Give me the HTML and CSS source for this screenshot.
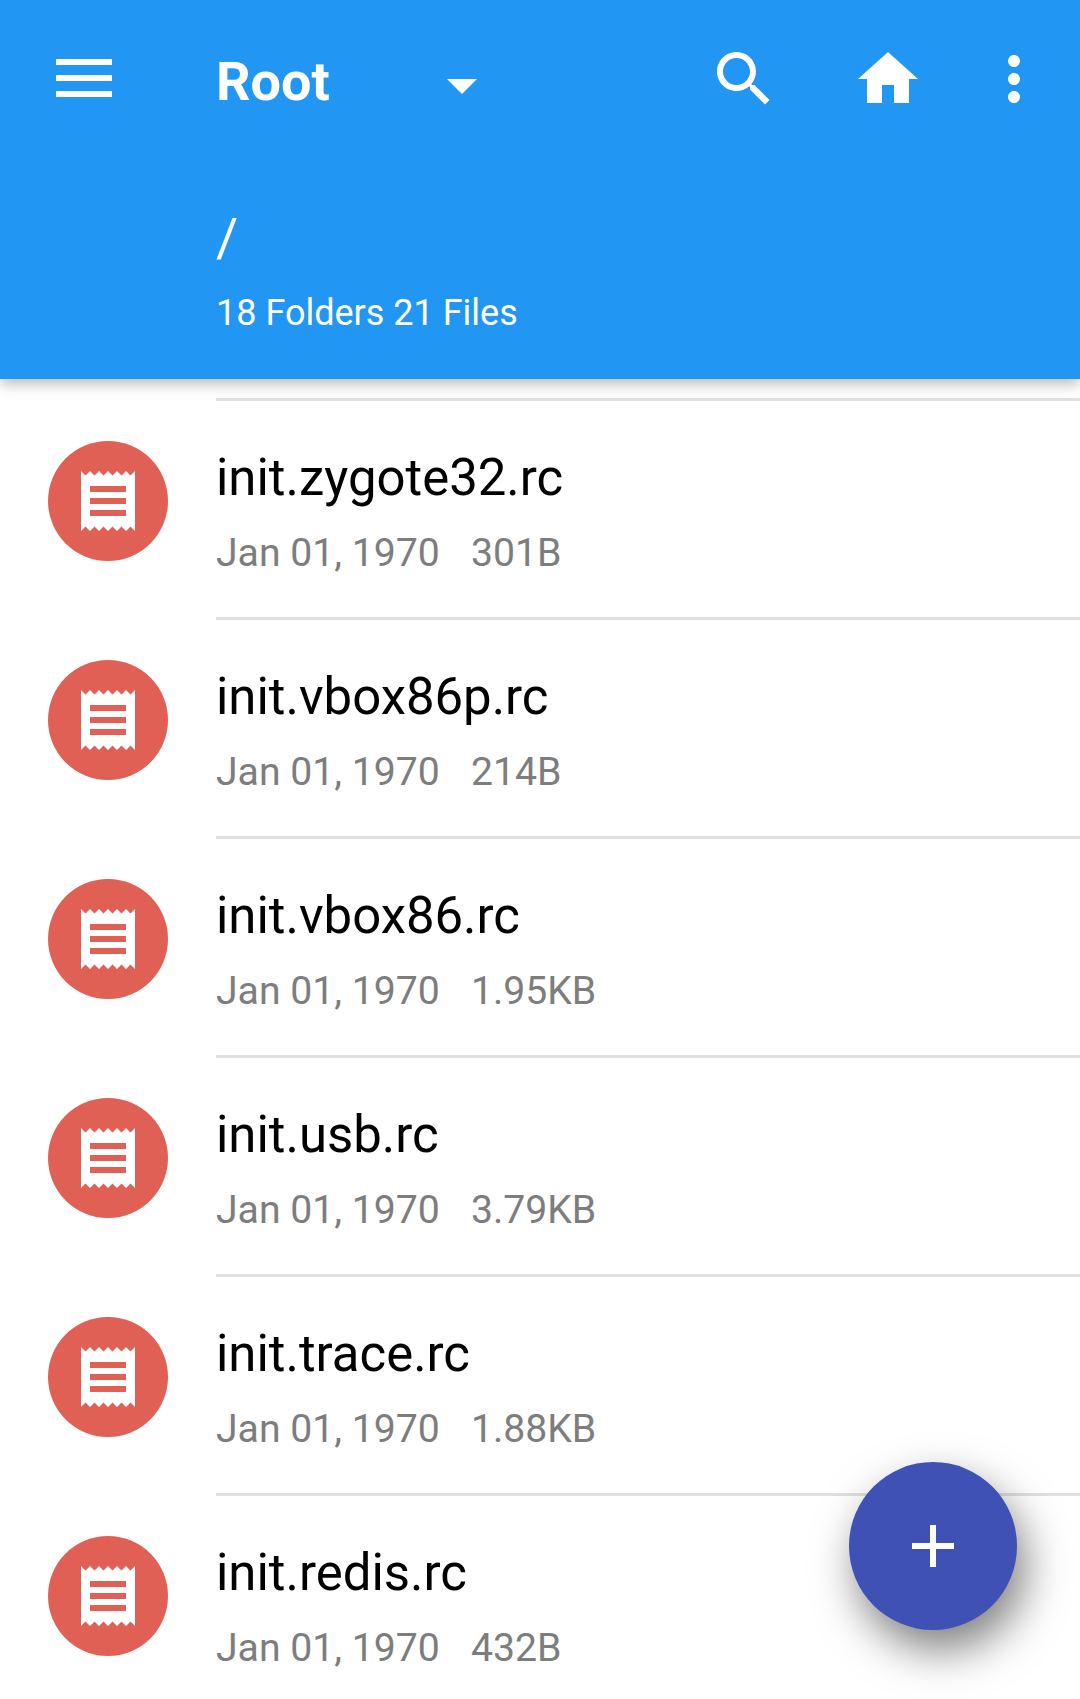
FILE: index.html
```html
<!DOCTYPE html>
<html lang="en">
<head>
    <meta charset="UTF-8">
    <title>Root</title>
    <link rel="stylesheet" href="styles.css">
</head>

<body>
    <header class="appbar">
        <div class="toolbar">
            <svg class="menu-icon" viewBox="0 0 56 38"><path d="M0 0h56v6H0zM0 16h56v6H0zM0 32h56v6H0z"/></svg>
            <h1 class="title">Root</h1>
            <svg class="icon caret" viewBox="0 0 24 24"><path d="M7 10l5 5 5-5z"/></svg>
            <svg class="icon search" viewBox="0 0 24 24"><path d="M15.5 14h-.79l-.28-.27C15.41 12.59 16 11.11 16 9.5 16 5.91 13.09 3 9.5 3S3 5.91 3 9.5 5.91 16 9.5 16c1.61 0 3.09-.59 4.23-1.57l.27.28v.79l5 4.99L20.49 19l-4.99-5zm-6 0C7.01 14 5 11.99 5 9.5S7.01 5 9.5 5 14 7.01 14 9.5 11.99 14 9.5 14z"/></svg>
            <svg class="icon home" viewBox="0 0 24 24"><path d="M10 20v-6h4v6h5v-8h3L12 3 2 12h3v8z"/></svg>
            <svg class="icon more" viewBox="0 0 24 24"><path d="M12 8c1.1 0 2-.9 2-2s-.9-2-2-2-2 .9-2 2 .9 2 2 2zm0 2c-1.1 0-2 .9-2 2s.9 2 2 2 2-.9 2-2-.9-2-2-2zm0 6c-1.1 0-2 .9-2 2s.9 2 2 2 2-.9 2-2-.9-2-2-2z"/></svg>
        </div>
        <div class="path">/</div>
        <div class="counts">18 Folders 21 Files</div>
    </header>

    <ul class="files">
        <li class="file">
            <svg class="file-icon" viewBox="0 0 120 120"><circle cx="60" cy="60" r="60"/><path transform="translate(24 24) scale(3)" class="receipt" d="M18 17H6v-2h12v2zm0-4H6v-2h12v2zm0-4H6V7h12v2zM3 22l1.5-1.5L6 22l1.5-1.5L9 22l1.5-1.5L12 22l1.5-1.5L15 22l1.5-1.5L18 22l1.5-1.5L21 22V2l-1.5 1.5L18 2l-1.5 1.5L15 2l-1.5 1.5L12 2l-1.5 1.5L9 2 7.5 3.5 6 2 4.5 3.5 3 2v20z"/></svg>
            <div class="file-info">
                <div class="file-name">init.zygote32.rc</div>
                <div class="file-meta"><span>Jan 01, 1970</span><span>301B</span></div>
            </div>
        </li>
        <li class="file">
            <svg class="file-icon" viewBox="0 0 120 120"><circle cx="60" cy="60" r="60"/><path transform="translate(24 24) scale(3)" class="receipt" d="M18 17H6v-2h12v2zm0-4H6v-2h12v2zm0-4H6V7h12v2zM3 22l1.5-1.5L6 22l1.5-1.5L9 22l1.5-1.5L12 22l1.5-1.5L15 22l1.5-1.5L18 22l1.5-1.5L21 22V2l-1.5 1.5L18 2l-1.5 1.5L15 2l-1.5 1.5L12 2l-1.5 1.5L9 2 7.5 3.5 6 2 4.5 3.5 3 2v20z"/></svg>
            <div class="file-info">
                <div class="file-name">init.vbox86p.rc</div>
                <div class="file-meta"><span>Jan 01, 1970</span><span>214B</span></div>
            </div>
        </li>
        <li class="file">
            <svg class="file-icon" viewBox="0 0 120 120"><circle cx="60" cy="60" r="60"/><path transform="translate(24 24) scale(3)" class="receipt" d="M18 17H6v-2h12v2zm0-4H6v-2h12v2zm0-4H6V7h12v2zM3 22l1.5-1.5L6 22l1.5-1.5L9 22l1.5-1.5L12 22l1.5-1.5L15 22l1.5-1.5L18 22l1.5-1.5L21 22V2l-1.5 1.5L18 2l-1.5 1.5L15 2l-1.5 1.5L12 2l-1.5 1.5L9 2 7.5 3.5 6 2 4.5 3.5 3 2v20z"/></svg>
            <div class="file-info">
                <div class="file-name">init.vbox86.rc</div>
                <div class="file-meta"><span>Jan 01, 1970</span><span>1.95KB</span></div>
            </div>
        </li>
        <li class="file">
            <svg class="file-icon" viewBox="0 0 120 120"><circle cx="60" cy="60" r="60"/><path transform="translate(24 24) scale(3)" class="receipt" d="M18 17H6v-2h12v2zm0-4H6v-2h12v2zm0-4H6V7h12v2zM3 22l1.5-1.5L6 22l1.5-1.5L9 22l1.5-1.5L12 22l1.5-1.5L15 22l1.5-1.5L18 22l1.5-1.5L21 22V2l-1.5 1.5L18 2l-1.5 1.5L15 2l-1.5 1.5L12 2l-1.5 1.5L9 2 7.5 3.5 6 2 4.5 3.5 3 2v20z"/></svg>
            <div class="file-info">
                <div class="file-name">init.usb.rc</div>
                <div class="file-meta"><span>Jan 01, 1970</span><span>3.79KB</span></div>
            </div>
        </li>
        <li class="file">
            <svg class="file-icon" viewBox="0 0 120 120"><circle cx="60" cy="60" r="60"/><path transform="translate(24 24) scale(3)" class="receipt" d="M18 17H6v-2h12v2zm0-4H6v-2h12v2zm0-4H6V7h12v2zM3 22l1.5-1.5L6 22l1.5-1.5L9 22l1.5-1.5L12 22l1.5-1.5L15 22l1.5-1.5L18 22l1.5-1.5L21 22V2l-1.5 1.5L18 2l-1.5 1.5L15 2l-1.5 1.5L12 2l-1.5 1.5L9 2 7.5 3.5 6 2 4.5 3.5 3 2v20z"/></svg>
            <div class="file-info">
                <div class="file-name">init.trace.rc</div>
                <div class="file-meta"><span>Jan 01, 1970</span><span>1.88KB</span></div>
            </div>
        </li>
        <li class="file">
            <svg class="file-icon" viewBox="0 0 120 120"><circle cx="60" cy="60" r="60"/><path transform="translate(24 24) scale(3)" class="receipt" d="M18 17H6v-2h12v2zm0-4H6v-2h12v2zm0-4H6V7h12v2zM3 22l1.5-1.5L6 22l1.5-1.5L9 22l1.5-1.5L12 22l1.5-1.5L15 22l1.5-1.5L18 22l1.5-1.5L21 22V2l-1.5 1.5L18 2l-1.5 1.5L15 2l-1.5 1.5L12 2l-1.5 1.5L9 2 7.5 3.5 6 2 4.5 3.5 3 2v20z"/></svg>
            <div class="file-info">
                <div class="file-name">init.redis.rc</div>
                <div class="file-meta"><span>Jan 01, 1970</span><span>432B</span></div>
            </div>
        </li>
    </ul>

    <button class="fab"><svg viewBox="0 0 42 42"><path d="M18 0h6v18h18v6H24v18h-6V24H0v-6h18z"/></svg></button>
</body>

</html>
```

FILE: styles.css
```css
html, body {
    height: 1699px;
    overflow: hidden;
}

body {
    margin: 0;
    font-family: Roboto, sans-serif;
    background-color: #fff;
    color: #000;
}

.appbar {
    position: relative;
    z-index: 1;
    height: 379px;
    background-color: #2196f3;
    color: #fff;
    box-shadow: 0 4px 14px rgba(0, 0, 0, 0.3);
    box-sizing: border-box;
    padding-top: 43px;
}

.toolbar {
    display: flex;
    align-items: flex-start;
    height: 72px;
}

.icon {
    width: 72px;
    height: 72px;
    flex-shrink: 0;
    fill: #fff;
}

.menu-icon {
    width: 56px;
    height: 38px;
    margin: 16px 0 0 56px;
    fill: #fff;
    flex-shrink: 0;
}

.title {
    margin: 3px 0 0 104px;
    width: 210px;
    font-size: 54px;
    font-weight: 700;
    line-height: 72px;
}

.caret {
    margin-top: 6px;
}

.search {
    margin-left: 210px;
}

.home {
    margin-left: 72px;
}

.more {
    margin-left: 54px;
}

.path {
    margin: 91px 0 0 216px;
    font-size: 54px;
    line-height: 64px;
}

.counts {
    margin: 21px 0 0 216px;
    font-size: 36px;
    line-height: 44px;
}

.files {
    list-style: none;
    margin: 0;
    padding: 19px 0 0;
}

.file {
    display: flex;
    align-items: flex-start;
    height: 219px;
    box-sizing: border-box;
}

.file-icon {
    width: 120px;
    height: 120px;
    margin: 43px 0 0 48px;
    flex-shrink: 0;
    fill: #e06055;
}

.receipt {
    fill: #fff;
}

.file-info {
    flex: 1;
    margin-left: 48px;
    padding-top: 43px;
    border-top: 3px solid #e0e0e0;
    height: 100%;
    box-sizing: border-box;
}

.file-name {
    font-size: 50.9px;
    line-height: 68px;
}

.file-meta {
    display: flex;
    gap: 31px;
    margin-top: 17px;
    font-size: 39.2px;
    line-height: 48px;
    color: #7d7d7d;
}

.fab {
    position: absolute;
    left: 849px;
    top: 1462px;
    width: 168px;
    height: 168px;
    padding: 0;
    border: none;
    border-radius: 50%;
    background-color: #3f51b5;
    box-shadow: 8px 20px 44px rgba(0, 0, 0, 0.5);
    display: flex;
    align-items: center;
    justify-content: center;
}

.fab svg {
    width: 42px;
    height: 42px;
    fill: #fff;
}
```
